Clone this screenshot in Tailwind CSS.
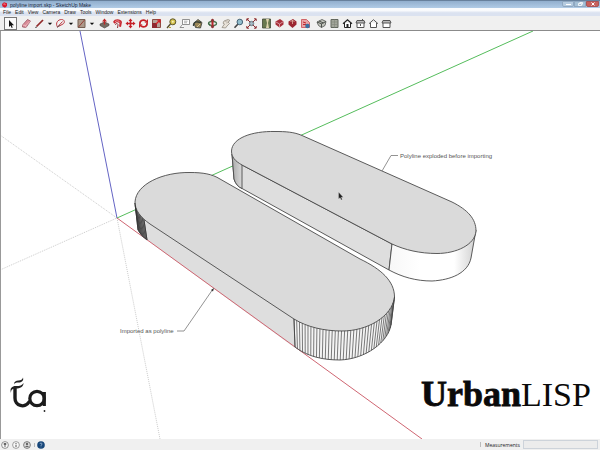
<!DOCTYPE html>
<html lang="en">
<head>
<meta charset="utf-8">
<title>polyline import.skp - SketchUp Make</title>
<script src="https://cdn.jsdelivr.net/npm/@tailwindcss/browser@4"></script>
</head>
<body class="flex h-screen flex-col overflow-hidden bg-white font-['Liberation_Sans','Noto_Sans',sans-serif] text-[5px] leading-[6px] text-[#222]">
<header class="flex h-[8px] shrink-0 items-center border-t border-[#67809c] bg-linear-to-b from-[#91aecd] to-[#b0cbe6] pl-[2px]">
  <svg class="mr-[3px] h-[6px] w-[5px]" viewBox="0 0 5 6"><path d="M0 2 2 .3 5 1.2V4L3 5.8.5 4.6Z" fill="#d8172c"/><path d="M1.2 2.2 3 1.8 3.2 3.2" stroke="#f6b0b5" stroke-width=".6" fill="none"/></svg>
  <h1 class="text-[#152238]">polyline import.skp - SketchUp Make</h1>
  <div class="ml-auto flex h-[6px] self-start pr-px">
    <button aria-label="Minimize" class="flex w-[12px] items-center justify-center rounded-b-xs border border-[#8fa7c0] bg-[#b5cbe0]"><svg class="h-[3px] w-[5px]" viewBox="0 0 5 3"><path d="M0 1h5v1H0z" fill="#fff"/></svg></button>
    <button aria-label="Restore" class="flex w-[12px] items-center justify-center border border-[#8fa7c0] bg-[#a5c0d6]"><svg class="h-[4px] w-[5px]" viewBox="0 0 5 4"><path d="M.5 1.5h3v2h-3zM1.5.5h3v2" fill="none" stroke="#fff" stroke-width=".8"/></svg></button>
    <button aria-label="Close" class="flex w-[13px] items-center justify-center rounded-b-xs border border-[#a85557] bg-[#c8605c]"><svg class="h-[4px] w-[4px]" viewBox="0 0 4 4"><path d="m.5.5 3 3m0-3-3 3" stroke="#fff"/></svg></button>
  </div>
</header>
<nav class="flex h-[8px] shrink-0 items-center gap-[4px] bg-linear-to-b from-[#fafbfd] from-30% to-[#dbe2f0] to-60% pl-[3px]">
  <button>File</button><button>Edit</button><button>View</button><button>Camera</button><button>Draw</button><button>Tools</button><button>Window</button><button>Extensions</button><button>Help</button>
</nav>
<div role="toolbar" aria-label="Tools" class="flex h-[15px] shrink-0 items-center border-b border-[#8b8b8b] bg-[#f0f0f0] pl-[4px] [&_svg]:h-[11px] [&_svg]:w-[11px] [&>button]:flex [&>button]:h-[13px] [&>button]:items-center [&>button]:justify-center">
  <button aria-label="Select" class="w-[13px] border border-[#777] bg-[#fafafa]"><svg viewBox="0 0 11 11"><path d="M4 2v7l1.600-1.500L6.700 10l1-.5-1-2.300H9Z" fill="#111"/></svg></button>
  <i class="w-[3px]"></i>
  <button aria-label="Eraser" class="w-[13px]"><svg viewBox="0 0 11 11"><path d="m1.500 7 5-5.500 3 1.500-4.500 6.500-3.500-.5Z" fill="#d88c98" stroke="#914956" stroke-width=".7"/><path d="m1.500 7 3.300.5 4.700-4.500M4.800 7.500v2" stroke="#f8cad0" stroke-width=".7" fill="none"/></svg></button>
  <button aria-label="Line" class="w-[13px]"><svg viewBox="0 0 11 11"><path d="M2.500 8.500 9 2" stroke="#922c2b" stroke-width="1.700"/><path d="m1 10 2-.5-1-1z" fill="#222"/></svg></button>
  <button aria-label="Line tools" class="w-[8px]"><svg viewBox="0 0 11 11"><path d="M2.500 4.500h6l-3 3z" fill="#111"/></svg></button>
  <button aria-label="Arc" class="w-[13px]"><svg viewBox="0 0 11 11"><path d="M2.500 9C0 5 3 1.500 6.500 1.500S10 5 8 6L2.500 9l5-5.500" stroke="#bd3941" fill="none"/><path d="M2 9.500 5 7" stroke="#666"/></svg></button>
  <button aria-label="Arc tools" class="w-[8px]"><svg viewBox="0 0 11 11"><path d="M2.500 4.500h6l-3 3z" fill="#111"/></svg></button>
  <button aria-label="Rectangle" class="w-[13px]"><svg viewBox="0 0 11 11"><path d="M2 1.500h7v8H2z" fill="#ad998a" stroke="#756052"/><path d="m2.500 9 6-7" stroke="#973e36"/></svg></button>
  <button aria-label="Shape tools" class="w-[8px]"><svg viewBox="0 0 11 11"><path d="M2.500 4.500h6l-3 3z" fill="#111"/></svg></button>
  <i class="w-[2px]"></i>
  <button aria-label="Push/Pull" class="w-[13px]"><svg viewBox="0 0 11 11"><path d="m1 6 4.500-2L10 6v1.500L5.500 10 1 7.500Z" fill="#756b61" stroke="#413b38" stroke-width=".6"/><path d="M5.500.5 8 3.500H6.200V6.500H4.800v-3H3Z" fill="#bd2627"/></svg></button>
  <button aria-label="Offset" class="w-[13px]"><svg viewBox="0 0 11 11"><path d="M1 4C3 0 9 1 10 4l-1 5-2-.5.500-3C6 3.500 3.500 4 3 6Z" fill="#c92b34"/><path d="M3.500 7C4 4.500 6 5.500 6 7l-.5 3" fill="none" stroke="#8c3134"/><path d="M3 3.700c2-1.500 4-1 5 .8" stroke="#f1b5b6" stroke-width=".7" fill="none"/></svg></button>
  <button aria-label="Move" class="w-[13px]"><svg viewBox="0 0 11 11"><path d="m5.500.5 2 2.500H6.300v1.700H8V3.500l2.500 2L8 7.500V6.300H6.300V8h1.200l-2 2.500-2-2.500h1.200V6.300H3v1.200l-2.500-2 2.500-2v1.200h1.700V3H3.500Z" fill="#c51f27"/></svg></button>
  <button aria-label="Rotate" class="w-[13px]"><svg viewBox="0 0 11 11"><path d="M2 6C1.500 2.500 5 1.300 8 3M9 5c.5 3.500-3 4.800-6 3" fill="none" stroke="#c51f27" stroke-width="1.800"/><path d="M6.500 4.500 10 5V1ZM4.500 6.500 1 6v4Z" fill="#c51f27"/></svg></button>
  <button aria-label="Scale" class="w-[13px]"><svg viewBox="0 0 11 11"><path d="M1.500 1.500h8v8h-8z" fill="#b7a198" stroke="#8d4c43"/><path d="M1 5h5v5H1z" fill="#8f2930"/><path d="m5 6 4-4M6 2h3v3" stroke="#d51f25" stroke-width="1.200" fill="none"/></svg></button>
  <i class="w-[2px]"></i>
  <button aria-label="Tape Measure" class="w-[13px]"><svg viewBox="0 0 11 11"><path d="M4.500 6 1 10" stroke="#544b27" stroke-width="1.300"/><circle cx="6.800" cy="3.800" r="3" fill="#d6c34d" stroke="#5d572e"/><circle cx="6.800" cy="3.800" r="1" fill="#f4efbe"/><path d="M3 9.500h2" stroke="#b9a73c"/></svg></button>
  <button aria-label="Text" class="w-[13px]"><svg viewBox="0 0 11 11"><path d="M3.500 1.500h7v5h-7zM3.500 6.500 1 9.500h4" fill="#fff" stroke="#777" stroke-width=".8"/><path d="M5 3.200h3.500M5 4.800h3" stroke="#777" stroke-width=".6"/></svg></button>
  <button aria-label="Paint Bucket" class="w-[13px]"><svg viewBox="0 0 11 11"><path d="M2 5 6 1.500l4 3L8.500 10l-5-.5Z" fill="#9b8656" stroke="#333a37" stroke-width=".8"/><path d="M1.500 8C1 5 3 3.500 6 4l3 .5" stroke="#353e35" stroke-width="1.300" fill="none"/><path d="m5 9 3-3" stroke="#d6c99c"/></svg></button>
  <i class="w-[2px]"></i>
  <button aria-label="Orbit" class="w-[13px]"><svg viewBox="0 0 11 11"><ellipse cx="5.500" cy="5.500" rx="4" ry="2" fill="none" stroke="#45704b" stroke-width="1.300"/><path d="M5.500 1v9" stroke="#b3282d" stroke-width="2"/><path d="m3.500 3 2-2.500 2 2.500M3.500 8l2 2.500 2-2.500" fill="#85383a"/><path d="m1 5 1.500 3 1-2" fill="#35623d"/></svg></button>
  <button aria-label="Pan" class="w-[13px]"><svg viewBox="0 0 11 11"><path d="M2 9.500 4.500 6 3 5.200 4 3l4-1.500 2 1L8 4l1.500 1.500L7 8 5.500 10Z" fill="#e8e2d9" stroke="#8a8277" stroke-width=".7"/><path d="m5 3.500 3-.7M6 5l2-.5" stroke="#aaa196" stroke-width=".6"/></svg></button>
  <button aria-label="Zoom" class="w-[13px]"><svg viewBox="0 0 11 11"><path d="M5 6 1.500 9.700" stroke="#444" stroke-width="1.600"/><circle cx="6.800" cy="4" r="2.800" fill="#91bdcd" stroke="#466477"/></svg></button>
  <button aria-label="Zoom Extents" class="w-[13px]"><svg viewBox="0 0 11 11"><circle cx="5.500" cy="5.500" r="2.200" fill="#a3bcc6" stroke="#596b73" stroke-width=".8"/><path d="M.8 3V.8H3M8 .8h2.200V3M10.200 8v2.200H8M3 10.200H.8V8M1 1l3.200 3.200M10 1 6.800 4.200M1 10l3.200-3.200M10 10 6.800 6.800" stroke="#8f2f33" fill="none"/></svg></button>
  <i class="w-[2px]"></i>
  <button aria-label="Add Location" class="w-[13px]"><svg viewBox="0 0 11 11"><path d="M1.500 1h8v9h-8z" fill="#69794f" stroke="#424936" stroke-width=".8"/><path d="m5 1 1 4-1 5h3l-1-5 1-4Z" fill="#dfd5ae"/></svg></button>
  <button aria-label="Get Models" class="w-[13px]"><svg viewBox="0 0 11 11"><path d="M1.500 3.500 6 1l3.500 2.500v3L5.500 9.500l-4-3Z" fill="#a82f3b"/><path d="m2 4 3.500 2 4-2.500M5.500 6v3" stroke="#e9bdc1" stroke-width=".7" fill="none"/></svg></button>
  <button aria-label="Share Model" class="w-[13px]"><svg viewBox="0 0 11 11"><path d="M1.500 3.500 6 1l3.500 2.500v3L5.500 10l-4-3.500Z" fill="#9c2631"/><path d="M5.500 2v4M3.500 4l2-2 2 2" stroke="#dfb4a2" stroke-width=".8" fill="none"/></svg></button>
  <button aria-label="Extension Warehouse" class="w-[13px]"><svg viewBox="0 0 11 11"><path d="M1.500 1.500h5l3 3v5h-8z" fill="#e7a3a5" stroke="#c94b52" stroke-width=".8"/><path d="m3 4 3 1M3 6.500h3" stroke="#c2282f"/><circle cx="7.500" cy="8" r="2.300" fill="#396f9f"/></svg></button>
  <i class="w-[3px]"></i>
  <button aria-label="Iso" class="w-[13px]"><svg viewBox="0 0 11 11"><path d="m1 4 5-2.500 4 2L9 7.500 5.500 9.500l-3-2Z" fill="#c4c6be" stroke="#4c514c" stroke-width=".8"/><path d="m1 4 4.500 1.800L10 3.500M5.500 5.800v3.700M3 3l4.500 2" stroke="#4c514c" fill="none"/></svg></button>
  <button aria-label="Top" class="w-[13px]"><svg viewBox="0 0 11 11"><path d="M2 1.500h7v8H2z" fill="#a3a69b" stroke="#62675d"/><path d="M5.500 1.500v8M2 4h7M2 6.500h7" stroke="#81867a" stroke-width=".6"/></svg></button>
  <button aria-label="Front" class="w-[13px]"><svg viewBox="0 0 11 11"><path d="M2.500 5v4.500h6V5" fill="#fff" stroke="#222"/><path d="m1 5.700 4.500-4 4.500 4" fill="none" stroke="#222" stroke-width="1.200"/><path d="M4.500 6h2v3.500h-2z" fill="#222"/></svg></button>
  <button aria-label="Right" class="w-[13px]"><svg viewBox="0 0 11 11"><path d="M2 5v4.500h7V5" fill="#fff" stroke="#555"/><path d="m1 5 1-2.500h7L10 5Z" fill="#bbb" stroke="#555"/><path d="M7.500 1v1.500M5.500 6v2" stroke="#555"/></svg></button>
  <button aria-label="Back" class="w-[13px]"><svg viewBox="0 0 11 11"><path d="M2.500 5v4.500h6V5" fill="#fff" stroke="#555"/><path d="m1 5.700 4.500-4 4.500 4" fill="none" stroke="#555"/></svg></button>
  <button aria-label="Left" class="w-[13px]"><svg viewBox="0 0 11 11"><path d="M2 5v4.500h7V5" fill="#fff" stroke="#555"/><path d="m1 5 1-2.500h7L10 5Z" fill="#bbb" stroke="#555"/></svg></button>
</div>
<main class="min-h-0 flex-1 overflow-hidden border-l border-[#999]">
<svg class="block h-full w-full" viewBox="1 31 599 408" role="img" aria-label="Two rounded slabs in the model view">
  <defs>
    <linearGradient id="back"><stop offset="0" stop-color="#f7f7f7"/><stop offset=".35" stop-color="#fff"/><stop offset=".75" stop-color="#fff"/><stop offset="1" stop-color="#cfcfcf"/></linearGradient>
    <linearGradient id="corner"><stop offset="0" stop-color="#aaa"/><stop offset="1" stop-color="#d9d9d9"/></linearGradient>
  </defs>
  <g fill="none" stroke="#b5b5b5" stroke-width=".7" stroke-dasharray="1 1">
    <path d="M0 135 117 218"/><path d="M0 270 117 218"/><path d="M117 218 160 439"/>
  </g>
  <path d="M80 31 117 218" stroke="#6464c4" fill="none"/>
  <path d="M117 218 533 31" stroke="#55bd5c" fill="none"/>
  <g stroke="#4a4a4a" stroke-width=".9" stroke-linejoin="round">
    <path d="M232 154 234 179Q236 186 243 189L389 270 392 244 242 165Z" fill="#dedede"/>
    <path d="M232 154 234 179Q236 186 242 188.500V165Z" fill="url(#corner)"/>
    <path d="M392 244 389 270C402 277 416 281 432 281 451 280 468 273 471 258L476 230Z" fill="url(#back)"/>
    <path d="M242 165C235 161 231.500 157 231.500 151 232 138 252 131 275 131.500 286 131.500 294 132 302 135.500L452 202C468 210 476 219 476 231 475 245 456 253.500 437 253.500 420 253.500 405 250 392 244Z" fill="#dadada"/>
  </g>
  <path d="M135 203 138 230Q141 236 147 240L295 348 294 318 150 223Z" fill="#dedede"/>
  <path d="M117 218 422 439" stroke="#cf6672" fill="none"/>
  <g stroke="#4a4a4a" stroke-width=".9" stroke-linejoin="round">
    <path d="M135 203 138 230Q141 236 147 240L144 220Z" fill="#888"/>
    <path d="M294 319 295 347C308 357 324 360 340 360 366 359 388 342 391 325L394.500 297Z" fill="#f4f4f4"/>
    <path d="M150 224C140 217 135 210 135 202 136 184 163 172 190 172.500 203 172.500 212 174 220 179L360 259C381 269 394.500 281 394.500 297 392 317 367 331 342 331 324 331 307 327 294 319Z" fill="#dadada"/>
  </g>
  <path id="hatch" fill="none" stroke="#444" stroke-width=".7"/>
  <path id="hatch-left" fill="none" stroke="#333" stroke-width=".7"/>
  <g fill="none" stroke="#777" stroke-width=".8"><path d="M382 171 391 155.500H398"/><path d="M177 331H184L213 289"/></g>
  <path d="m214 288-1 3.500-2-1.500Z" fill="#333"/>
  <g class="text-[6px]" fill="#555"><text x="400" y="158">Polyline exploded before importing</text><text x="120" y="333">Imported as polyline</text></g>
  <path d="M338.500 192v7l1.600-1.300 1 2.300 1.200-.5-1-2.200h2Z" fill="#222" stroke="#eee" stroke-width=".3"/>
  <g fill="none" stroke="#1c1c1c" stroke-linecap="round">
    <path d="M15 388V398A7.500 7.500 0 0 0 29 402" stroke-width="3.400"/>
    <circle cx="37" cy="398.500" r="7.200" stroke-width="3.200"/>
    <path d="M44.300 392V406" stroke-width="3.200" stroke-linecap="butt"/>
  </g>
  <g fill="#222">
    <path d="M11 393C9.500 388 12 386 16 386 20 386 22 385.500 23.500 383 23.500 387 20 388.500 16 388.500 12.500 388.500 11 389.500 11 393Z"/>
    <path d="M14 384.500C14 381.500 16 380.500 18.500 380.500 21 380.500 22.500 379.500 23 377.500 24 381 21.500 382.500 18.500 382.500 16 382.500 14.500 383 14 384.500Z"/>
    <circle cx="44.500" cy="411" r=".9"/>
  </g>
  <text x="421" y="406" class="font-['Liberation_Serif',serif]" fill="#0a0a0a"><tspan class="text-[36px] font-bold" stroke="#0a0a0a" stroke-width=".8">Urban</tspan><tspan class="text-[34px]">LISP</tspan></text>
</svg>
</main>
<footer class="flex h-[11px] shrink-0 items-center bg-[#f0f0f0] pl-[1px] pr-[2px]">
  <div class="flex gap-[3px] [&_svg]:size-[8px]">
    <button aria-label="Geo-location"><svg viewBox="0 0 8 8"><circle cx="4" cy="4" r="3.400" fill="#fafafa" stroke="#777" stroke-width=".8"/><path d="M4 6V3.500M3 2.500h2v1H3z" stroke="#666" fill="none"/></svg></button>
    <button aria-label="Credits"><svg viewBox="0 0 8 8"><circle cx="4" cy="4" r="3.400" fill="#fafafa" stroke="#888" stroke-width=".8"/><path d="M4 2v1M4 3.700V6" stroke="#555"/></svg></button>
    <button aria-label="Sign in"><svg viewBox="0 0 8 8"><circle cx="4" cy="4" r="3.400" fill="#ddd" stroke="#666" stroke-width=".8"/><circle cx="4" cy="3" r="1.200" fill="#666"/><path d="M2 6Q4 3.500 6 6Z" fill="#666"/></svg></button>
    <i class="my-[2px] -mr-[1px] w-px bg-[#bbb]"></i>
    <button aria-label="Help"><svg viewBox="0 0 8 8"><circle cx="4" cy="4" r="3.800" fill="#174679"/><path d="M3 3Q3 2 4 2T5 3 4 4.200V5M4 5.600v.7" stroke="#a9c3dd" stroke-width=".7" fill="none"/></svg></button>
  </div>
  <i class="ml-auto mr-[4px] h-[5px] w-px bg-[#bbb]"></i>
  <label for="vcb" class="mr-[3px] font-['Open_Sans',sans-serif]">Measurements</label>
  <input id="vcb" type="text" class="h-[9px] w-[75px] border border-[#cdd3da] bg-[#ececec] px-[1px]">
</footer>
<script>
// Draw the facet edges between the upper and lower rim of a rounded end.
function facets(id, upper, lower, count) {
  const make = d => { const p = document.createElementNS('http://www.w3.org/2000/svg', 'path'); p.setAttribute('d', d); return p; };
  const a = make(upper), b = make(lower);
  const la = a.getTotalLength(), lb = b.getTotalLength();
  let d = '';
  for (let i = 0; i <= count; i++) {
    const p = a.getPointAtLength(la * i / count), q = b.getPointAtLength(lb * i / count);
    d += `M${p.x} ${p.y}L${q.x} ${q.y}`;
  }
  document.getElementById(id).setAttribute('d', d);
}
facets('hatch', 'M294 319C307 327 324 331 342 331 367 331 392 317 394.500 297', 'M295 347C308 357 324 360 340 360 366 359 388 342 391 325', 38);
facets('hatch-left', 'M135 203C135 210 138 214 144 220', 'M138 230Q141 236 147 240', 8);
</script>
</body>
</html>
